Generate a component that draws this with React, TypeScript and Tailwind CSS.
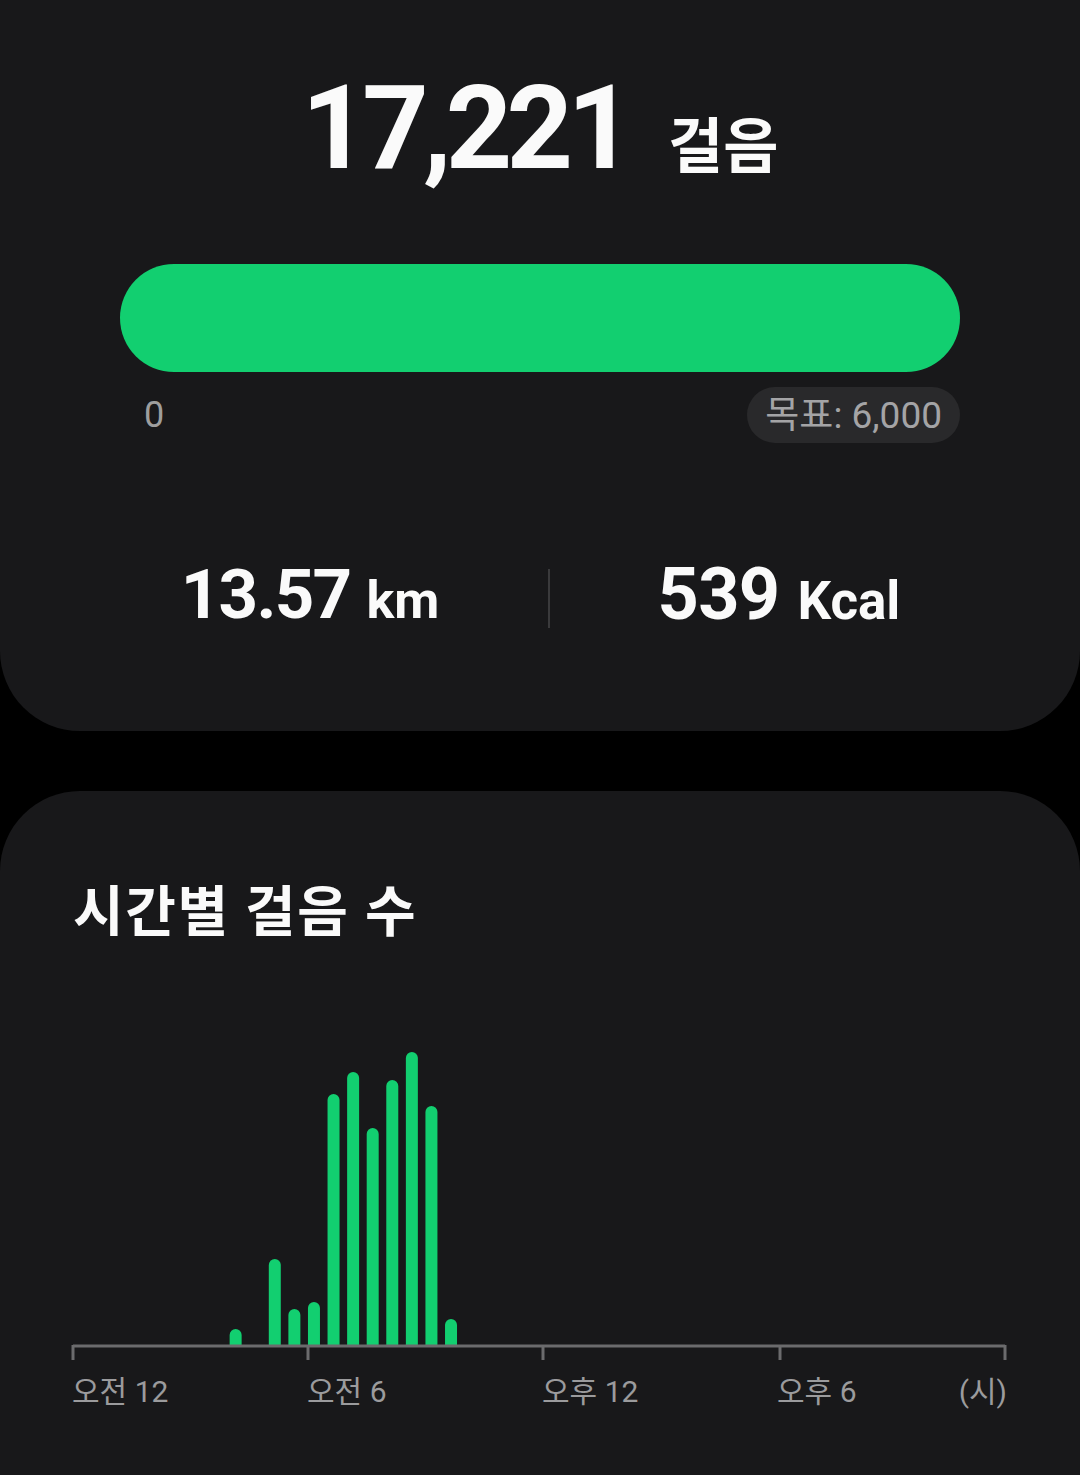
const bars = [
  { slot: 8, top: 1329 },
  { slot: 10, top: 1259 },
  { slot: 11, top: 1309 },
  { slot: 12, top: 1302 },
  { slot: 13, top: 1094 },
  { slot: 14, top: 1072 },
  { slot: 15, top: 1128 },
  { slot: 16, top: 1080 },
  { slot: 17, top: 1052 },
  { slot: 18, top: 1106 },
  { slot: 19, top: 1319 },
];

// chart svg starts at page y 1040
const OFFSET = 1040;
const BASE = 1345 - OFFSET;

function HourlyChart() {
  return (
    <svg width="1080" height="322" viewBox="0 0 1080 322" className="block">
      {bars.map((b) => {
        const x = 73 + b.slot * 19.58;
        const top = b.top - OFFSET;
        return (
          <path
            key={b.slot}
            d={`M${x} ${BASE} V${top + 6} A6 6 0 0 1 ${x + 12} ${top + 6} V${BASE} Z`}
            fill="#12cf70"
          />
        );
      })}
      <line x1="73" y1={BASE + 1} x2="1005" y2={BASE + 1} stroke="#6b6b6d" strokeWidth="3" />
      {[73, 308, 543, 780, 1005].map((x) => (
        <line key={x} x1={x} y1={BASE} x2={x} y2={BASE + 15} stroke="#6b6b6d" strokeWidth="3" />
      ))}
    </svg>
  );
}

export default function App() {
  return (
    <div
      className="w-[1080px] h-[1475px] overflow-hidden bg-black flex flex-col text-[#fafafa]"
      style={{ fontFamily: "Roboto, 'Noto Sans CJK KR', sans-serif" }}
    >
      {/* 오늘 걸음 */}
      <div className="h-[731px] shrink-0 bg-[#18181a] rounded-b-[80px] flex flex-col pt-[70px]">
        <div className="flex items-baseline justify-center">
          <span className="text-[116px] leading-none font-bold tracking-[-0.05em]">17,221</span>
          <span className="text-[60px] leading-none font-bold ml-[40px]">걸음</span>
        </div>

        <div className="mx-[120px] mt-[78px] h-[108px] rounded-full bg-[#12cf70]" />

        <div className="mx-[120px] mt-[15px] flex items-center justify-between">
          <span className="pl-[24px] text-[36px] leading-none text-[#9e9e9e]">0</span>
          <span className="h-[56px] px-[18px] rounded-full bg-[#29292b] flex items-center text-[37px] leading-none text-[#a4a4a6]">
            목표: 6,000
          </span>
        </div>

        <div className="mt-[122px] flex items-center px-[72px]">
          <div className="w-[476px] flex items-baseline justify-center leading-[60px]">
            <span className="text-[69px] font-bold tracking-[-0.025em]">13.57</span>
            <span className="text-[52px] font-bold ml-[16px]">km</span>
          </div>
          <div className="w-[2px] h-[59px] bg-[#3a3a3c]" />
          <div className="flex-1 flex items-baseline justify-center leading-[60px]">
            <span className="text-[72px] font-bold tracking-[-0.01em]">539</span>
            <span className="text-[53px] font-bold ml-[18px]">Kcal</span>
          </div>
        </div>
      </div>

      {/* 시간별 걸음 수 */}
      <div className="mt-[60px] flex-1 bg-[#18181a] rounded-t-[80px] pt-[94px]">
        <h2 className="px-[73px] text-[55px] leading-none font-bold tracking-[0.03em]">시간별 걸음 수</h2>
        <div className="mt-[100px]">
          <HourlyChart />
        </div>
        <div className="mt-[15px] flex pl-[72px] pr-[73px] text-[30px] leading-none text-[#9b9b9d]">
          <span className="w-[235px]">오전 12</span>
          <span className="w-[235px]">오전 6</span>
          <span className="w-[235px]">오후 12</span>
          <span>오후 6</span>
          <span className="ml-auto">(시)</span>
        </div>
      </div>
    </div>
  );
}
